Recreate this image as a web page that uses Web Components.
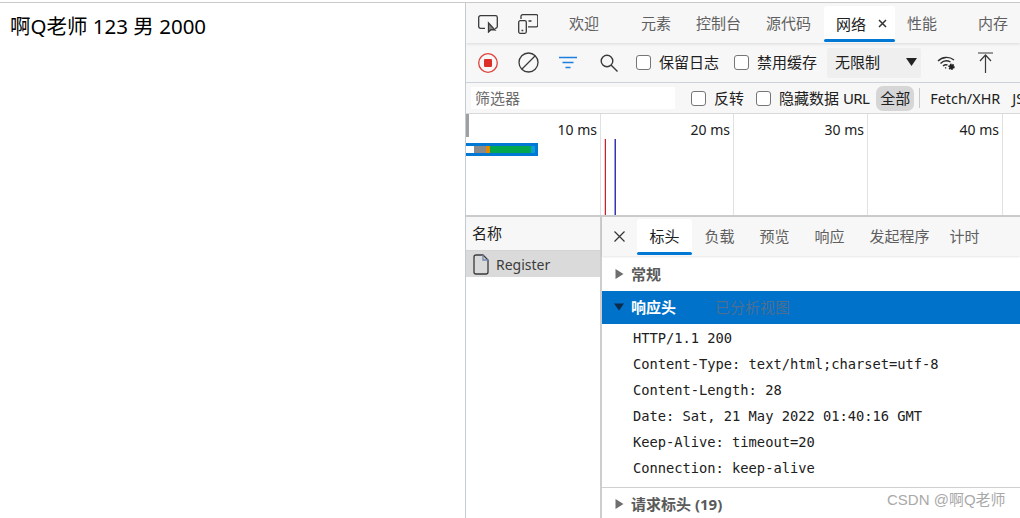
<!DOCTYPE html>
<html lang="zh">
<head>
<meta charset="utf-8">
<title>devtools</title>
<style>
    html, body { margin: 0; height: 100%; overflow: hidden; background: #fff; }
    body { font-family: "Noto Sans", "Noto Sans CJK SC", sans-serif; color: #202020; }
</style>
</head>
<body>
<app-shell>
    <page-view slot="page">啊Q老师 123 男 2000</page-view>
    <dev-tools slot="tools"></dev-tools>
</app-shell>

<script>
    const CJK = `"Noto Sans", "Noto Sans CJK SC", sans-serif`

    class AppShell extends HTMLElement {
        constructor() {
            super()
            this.attachShadow({ mode: 'open' })
            this.shadowRoot.innerHTML = `
            <style>
                :host { display: flex; width: 1020px; height: 516px; margin-top: 2px; box-sizing: border-box; border-top: 1px solid #c9c9c9; overflow: hidden; }
                .left { width: 465px; flex: none; }
                .right { width: 555px; flex: none; border-left: 1px solid #c4c9d2; box-sizing: border-box; }
            </style>
            <div class="left"><slot name="page"></slot></div>
            <div class="right"><slot name="tools"></slot></div>
        `
        }
    }

    class PageView extends HTMLElement {
        constructor() {
            super()
            this.attachShadow({ mode: 'open' })
            this.shadowRoot.innerHTML = `
            <style>
                :host { display: block; padding: 8px 0 0 10px; font: 20.5px/30px ${CJK}; color: #000; }
            </style>
            <slot></slot>
        `
        }
    }

    class TabItem extends HTMLElement {
        constructor() {
            super()
            this.attachShadow({ mode: 'open' })
            this.shadowRoot.innerHTML = `
            <style>
                :host { display: flex; align-items: center; flex: none; box-sizing: border-box; padding-bottom: 2px; font: 15px ${CJK}; color: #5f5f5f; white-space: nowrap; position: relative; }
                :host([active]) { background: #fff; color: #202020; border-radius: 3px 3px 0 0; padding-bottom: 4px; }
                :host([active])::after { content: ""; position: absolute; left: 0; right: 0; bottom: 0; height: 3px; background: #0078d4; border-radius: 2px; }
            </style>
            <slot></slot>
        `
        }
    }

    class CheckItem extends HTMLElement {
        constructor() {
            super()
            this.attachShadow({ mode: 'open' })
            this.shadowRoot.innerHTML = `
            <style>
                :host { display: inline-flex; align-items: center; flex: none; gap: 8px; font: 15px ${CJK}; color: #202020; white-space: nowrap; }
                i { width: 15px; height: 15px; box-sizing: border-box; border: 1px solid #767676; border-radius: 3px; background: #fff; }
                span { margin-top: -2px; }
            </style>
            <i></i><span><slot></slot></span>
        `
        }
    }

    class TimeOverview extends HTMLElement {
        constructor() {
            super()
            this.attachShadow({ mode: 'open' })
            const labels = ['10 ms', '20 ms', '30 ms', '40 ms']
            this.shadowRoot.innerHTML = `
            <style>
                :host { display: block; position: relative; height: 101px; flex: none; background: #fff; overflow: hidden; }
                .grid { display: grid; grid-template-columns: 135px 133px 134px 135px 1fr; height: 100%; }
                .grid div { box-sizing: border-box; border-right: 1px solid #e1e1e1; text-align: right; padding: 6px 3px 0 0; font: 14px/20px ${CJK}; color: #202020; }
                .grid div:last-child { border: 0; }
                .handle { position: absolute; left: 0; top: 0; width: 3px; height: 23px; background: #a0a0a0; }
                .bar { position: absolute; left: 0; top: 29px; width: 72px; height: 13px; box-sizing: border-box; border: 3px solid #0078d4; border-left: 0; display: flex; background: #fff; }
                .bar b { display: block; height: 100%; }
                .line { position: absolute; top: 25px; bottom: 0; width: 1px; }
            </style>
            <div class="grid">${labels.map(l => `<div>${l}</div>`).join('')}<div></div></div>
            <span class="handle"></span>
            <div class="bar">
                <b style="width:8px;background:#fff"></b>
                <b style="width:12px;background:#8a8a8a"></b>
                <b style="width:4px;background:#df8a00"></b>
                <b style="width:41px;background:#03a84e"></b>
                <b style="width:4px;background:#0a9fd8"></b>
            </div>
            <span class="line" style="left:139px;background:#c8202c;box-shadow:-1px 0 0 #f2c6c9"></span>
            <span class="line" style="left:149px;background:#3535b8;box-shadow:-1px 0 0 #9a9ad8"></span>
        `
        }
    }

    class HeaderRow extends HTMLElement {
        constructor() {
            super()
            this.attachShadow({ mode: 'open' })
            this.shadowRoot.innerHTML = `
            <style>
                :host { display: block; height: 26px; font: 13.75px/26px "DejaVu Sans Mono", "Liberation Mono", monospace; letter-spacing: -.02px; color: #202020; padding-left: 31px; white-space: nowrap; }
            </style>
            <slot></slot>
        `
        }
    }

    class SectionHead extends HTMLElement {
        constructor() {
            super()
            this.attachShadow({ mode: 'open' })
            const open = this.hasAttribute('open')
            const arrow = open
                ? '<svg width="10" height="10" viewBox="0 0 10 10"><path d="M0 1.500h10L5 8.500z" fill="#0b2b4a"/></svg>'
                : '<svg width="10" height="10" viewBox="0 0 10 10"><path d="M1.500 0l8 5-8 5z" fill="#6e6e6e"/></svg>'
            this.shadowRoot.innerHTML = `
            <style>
                :host { display: flex; align-items: center; flex: none; gap: 7px; box-sizing: border-box; padding: 0 0 2px 12px; font: 700 15px ${CJK}; color: #5a5a5a; white-space: nowrap; }
                :host([open]) { background: #0072c9; color: #fff; }
                svg { flex: none; margin-top: 1px; }
                ::slotted(em) { font: 400 15px ${CJK}; color: #4d6f93; margin-left: 32px; }
            </style>
            ${arrow}<slot></slot>
        `
        }
    }

    class DevTools extends HTMLElement {
        constructor() {
            super()
            this.attachShadow({ mode: 'open' })
            this.shadowRoot.innerHTML = `
            <style>
                :host { display: flex; flex-direction: column; height: 515px; background: #fff; font-family: ${CJK}; overflow: hidden; position: relative; }
                svg { display: block; flex: none; }

                .tabs { display: flex; align-items: stretch; height: 40px; flex: none; background: #f7f7f7; padding: 0 0 1px 12px; box-sizing: border-box; box-shadow: 0 1px 3px rgba(0,0,0,.12); position: relative; z-index: 1; }
                .tabs tab-item { padding-bottom: 0; }
                .tabs tab-item[active] { padding-bottom: 2px; }
                .tabs .ico { display: flex; align-items: center; flex: none; padding-top: 3px; }
                .net { display: flex; gap: 12px; padding-left: 12px; }

                .tools { display: flex; align-items: center; height: 40px; flex: none; background: #f7f7f7; box-sizing: border-box; padding-left: 12px; border-bottom: 1px solid #cdd2da; }
                .select { display: flex; align-items: center; justify-content: space-between; box-sizing: border-box; width: 94px; height: 30px; margin-left: 10px; padding: 0 4px 2px 8px; background: #efefef; border-radius: 2px; font-size: 15px; color: #202020; flex: none; }

                .filter { display: flex; align-items: center; height: 31px; flex: none; background: #f7f7f7; box-sizing: border-box; border-bottom: 1px solid #d9d9d9; white-space: nowrap; }
                .input { width: 204px; height: 22px; margin-left: 5px; background: #fff; font: 15px/22px ${CJK}; color: #6b6b6b; padding-left: 4px; box-sizing: border-box; flex: none; }
                .all { width: 38px; height: 25px; margin-left: 7px; background: #d6d6d6; border-radius: 7px; font-size: 15px; line-height: 25px; text-align: center; flex: none; }
                .sep { width: 1px; height: 20px; background: #c8c8c8; margin: 0 10px 0 5px; flex: none; }
                .chip { font-size: 14.4px; color: #202020; flex: none; }
                .url { letter-spacing: -.6px; }

                .split { flex: 1; min-height: 0; display: flex; border-top: 2px solid #cbcbcb; }
                .names { width: 136px; flex: none; box-sizing: border-box; border-right: 2px solid #cdcdcd; background: #fff; }
                .names .hd { height: 34px; box-sizing: border-box; background: #f7f7f7; border-bottom: 1px solid #d4d4d4; padding-left: 6px; font-size: 15px; line-height: 32px; color: #202020; }
                .names .row { display: flex; align-items: center; gap: 6px; height: 26px; padding-left: 7px; background: #dadada; font-size: 14px; color: #3c3c3c; }

                .detail { flex: 1; min-width: 0; display: flex; flex-direction: column; }
                .dtabs { display: flex; height: 39px; flex: none; background: #f7f7f7; box-sizing: border-box; padding-bottom: 1px; box-shadow: 0 1px 2px rgba(0,0,0,.1); position: relative; align-items: stretch; }
                .dtabs .x { width: 35px; display: flex; align-items: center; justify-content: center; flex: none; }
                .d1 { height: 34px; }
                .d2 { height: 33px; }
                .rows { padding-top: 1px; height: 164px; box-sizing: border-box; border-bottom: 1px solid #d0d0d0; flex: none; }
                .d3 { height: 32px; }
                .mark { position: absolute; left: 421px; top: 486px; font: 15px/22px "Liberation Sans", "Noto Sans CJK SC", sans-serif; color: #a9a9a9; white-space: nowrap; }
            </style>

            <div class="tabs">
                <span class="ico" style="width:40px">
                    <svg width="20" height="18" viewBox="0 0 20 18" fill="none" stroke="#3a3a3a" stroke-width="1.300"><path d="M7 13.400H2.500A1.800 1.800 0 0 1 .7 11.600V2.500A1.800 1.800 0 0 1 2.500 .7h15a1.800 1.800 0 0 1 1.800 1.800v9.100a1.800 1.800 0 0 1-1.800 1.800H17"/><path d="M10.500 8v9l2.400-2.300 4.100.2z" fill="#8a8a8a"/></svg>
                </span>
                <span class="ico" style="width:51px">
                    <svg width="20" height="20" viewBox="0 0 20 20" fill="none" stroke="#3a3a3a" stroke-width="1.300"><path d="M3 5V2.300A1.600 1.600 0 0 1 4.600 .7h13.600a1.600 1.600 0 0 1 1.600 1.600v9a1.600 1.600 0 0 1-1.600 1.600H10"/><rect x=".7" y="6.700" width="7.600" height="12.600" rx="1.500"/><path d="M10.500 7h3M3.500 16.500h1.800" stroke-width="1.500"/></svg>
                </span>
                <tab-item style="width:72px">欢迎</tab-item>
                <tab-item style="width:55px">元素</tab-item>
                <tab-item style="width:70px">控制台</tab-item>
                <tab-item style="width:58px">源代码</tab-item>
                <tab-item active style="width:71px;margin-top:3px"><span class="net">网络<svg style="margin:auto 0" width="9" height="9" viewBox="0 0 9 9" stroke="#333" stroke-width="1.500"><path d="M1 1l7 7M8 1L1 8"/></svg></span></tab-item>
                <tab-item style="width:83px;padding-left:12px">性能</tab-item>
                <tab-item style="width:42px">内存</tab-item>
            </div>

            <div class="tools">
                <svg width="20" height="20" viewBox="0 0 20 20" style="margin-right:20px"><circle cx="10" cy="10" r="9.300" fill="none" stroke="#e0403a" stroke-width="1.300"/><rect x="6" y="6" width="8" height="8" rx="1" fill="#dc2f2a"/></svg>
                <svg width="21" height="21" viewBox="0 0 21 21" fill="none" stroke="#3a3a3a" stroke-width="1.300" style="margin-right:20px"><circle cx="10.500" cy="10.500" r="9.500"/><path d="M4 17L17 4"/></svg>
                <svg width="18" height="13" viewBox="0 0 18 13" stroke="#1a7fe0" stroke-width="1.300" style="margin-right:23px"><path d="M0 1.500h18M3.500 6.500h11M6.500 11.500h5"/></svg>
                <svg width="18" height="18" viewBox="0 0 18 18" fill="none" stroke="#3a3a3a" stroke-width="1.400" style="margin-right:18px"><circle cx="7" cy="7" r="5.800"/><path d="M11 11l6.500 6.500"/></svg>
                <check-item>保留日志</check-item>
                <check-item style="margin-left:15px">禁用缓存</check-item>
                <div class="select">无限制<svg width="11" height="8" viewBox="0 0 11 8"><path d="M0 0h11L5.500 8z" fill="#222"/></svg></div>
                <svg width="20" height="16" viewBox="0 0 20 16" fill="none" stroke="#2e2e2e" stroke-width="1.400" style="margin-left:16px"><path d="M1 6a12 12 0 0 1 16-1M3.500 8.500a8.500 8.500 0 0 1 10-1.500M6 11a4.500 4.500 0 0 1 4.500-1M8.200 13.200a1.500 1.500 0 0 1 1-.5"/><circle cx="14.500" cy="11.800" r="2.400" fill="#222" stroke="#222" stroke-width="1.600" stroke-dasharray="1.400 .8"/></svg>
                <svg width="15" height="21" viewBox="0 0 15 21" fill="none" stroke="#3a3a3a" stroke-width="1.200" style="margin-left:21px"><path d="M0 1h15M7.500 21V3M2 9l5.500-6L13 9"/></svg>
            </div>

            <div class="filter">
                <div class="input">筛选器</div>
                <check-item style="margin-left:16px">反转</check-item>
                <check-item style="margin-left:12px">隐藏数据 <span class="url">URL</span></check-item>
                <div class="all">全部</div>
                <div class="sep"></div>
                <div class="chip">Fetch/XHR</div>
                <div class="chip" style="margin-left:12px">JS</div>
            </div>

            <time-overview></time-overview>

            <div class="split">
                <div class="names">
                    <div class="hd">名称</div>
                    <div class="row">
                        <svg width="17" height="21" viewBox="0 0 17 21" fill="none" stroke="#3a3a3a" stroke-width="1.300"><path d="M10 1H3a2 2 0 0 0-2 2v15a2 2 0 0 0 2 2h10a2 2 0 0 0 2-2V6z"/><path d="M10 1v5h5" stroke="#6f86b0"/></svg>
                        Register
                    </div>
                </div>
                <div class="detail">
                    <div class="dtabs">
                        <span class="x"><svg width="11" height="11" viewBox="0 0 11 11" stroke="#333" stroke-width="1.200"><path d="M.5.500l10 10M10.500.500l-10 10"/></svg></span>
                        <tab-item active style="width:55px;justify-content:center;margin-top:2px">标头</tab-item>
                        <tab-item style="width:55px;justify-content:center">负载</tab-item>
                        <tab-item style="width:55px;justify-content:center">预览</tab-item>
                        <tab-item style="width:55px;justify-content:center">响应</tab-item>
                        <tab-item style="width:85px;justify-content:center">发起程序</tab-item>
                        <tab-item style="width:45px;justify-content:center">计时</tab-item>
                    </div>
                    <section-head class="d1" style="margin-top:1px">常规</section-head>
                    <section-head class="d2" open>响应头<em>已分析视图</em></section-head>
                    <div class="rows">
                        <header-row>HTTP/1.1 200</header-row>
                        <header-row>Content-Type: text/html;charset=utf-8</header-row>
                        <header-row>Content-Length: 28</header-row>
                        <header-row>Date: Sat, 21 May 2022 01:40:16 GMT</header-row>
                        <header-row>Keep-Alive: timeout=20</header-row>
                        <header-row>Connection: keep-alive</header-row>
                    </div>
                    <section-head class="d3">请求标头 (19)</section-head>
                </div>
            </div>
            <div class="mark">CSDN @啊Q老师</div>
        `
        }
    }

    customElements.define('tab-item', TabItem)
    customElements.define('check-item', CheckItem)
    customElements.define('time-overview', TimeOverview)
    customElements.define('header-row', HeaderRow)
    customElements.define('section-head', SectionHead)
    customElements.define('dev-tools', DevTools)
    customElements.define('page-view', PageView)
    customElements.define('app-shell', AppShell)
</script>
</body>
</html>
